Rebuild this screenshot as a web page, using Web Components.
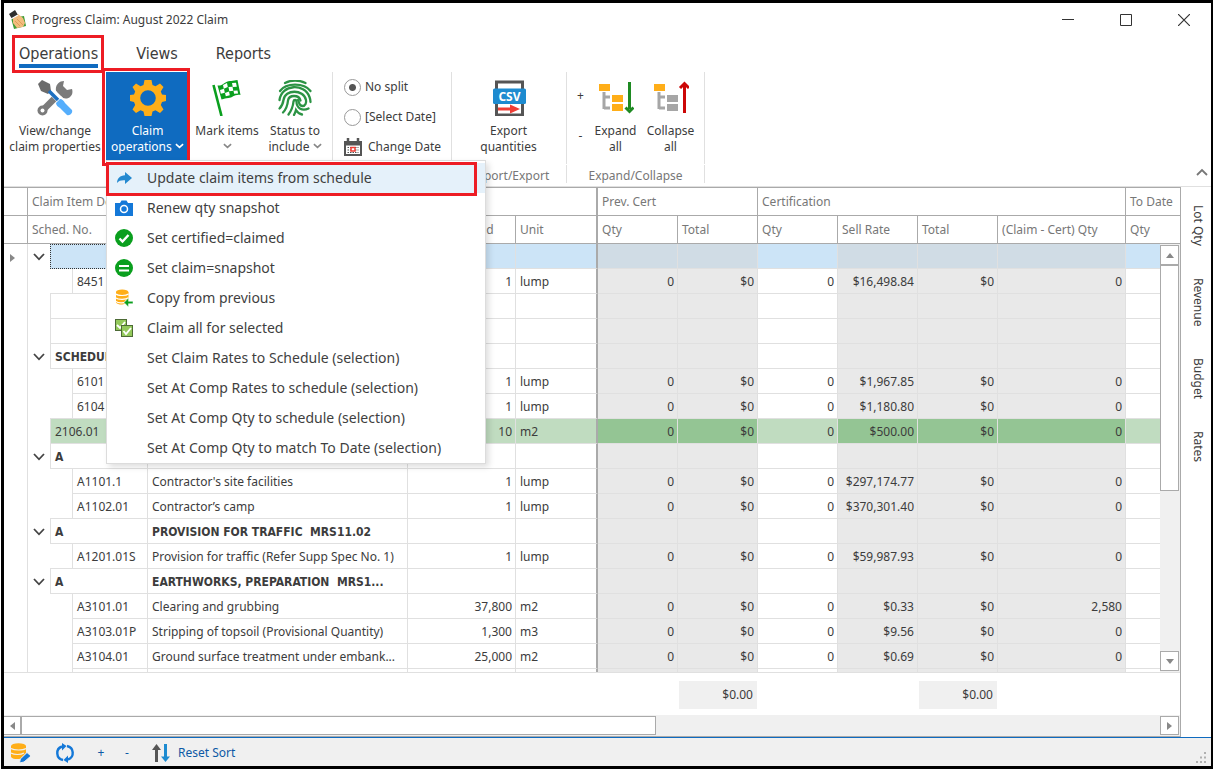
<!DOCTYPE html>
<html lang="en">
<head>
<meta charset="utf-8">
<title>Progress Claim: August 2022 Claim</title>
<style>
  body { margin: 0; font: 12px/16px "Noto Sans", "Open Sans", sans-serif; color: #3c3c3c; background: #fff; }
</style>
</head>
<body>
<claim-window></claim-window>
<script>
const ICONS = {
  app: ['0 0 20 20', '<path d="M3 8l13-2 2 10-12 3z" fill="#3f9c35"/><path d="M5 6l5-2 5 4 2 5-2 4-6 1-4-5z" fill="#f3bd7e"/><path d="M9 9l6 6M7 11l5 5" stroke="#d9964f" stroke-width=".8"/><path d="M1 4l6-4 3 5-6 4z" fill="#2e2e2e"/><path d="M3 9l7-4" stroke="#fff" stroke-width="1.4"/>'],
  tools: ['0 0 36 36', '<path d="M7.500 28.500L24 12" stroke="#7b7b7b" stroke-width="6.500"/><circle cx="5.500" cy="30.500" r="5" fill="#7b7b7b"/><path d="M27 1l-1 5 4 4 5-1c2 6-3 11-9 9l-7-7c-1-6 3-10 8-10z" fill="#7b7b7b"/><circle cx="5.500" cy="30.500" r="2" fill="#fff"/><path d="M12 9l12 12" stroke="#fff" stroke-width="7"/><path d="M1 4l4-4 8 4 1 7-3 3-7-3z" fill="#6b6b6b"/><path d="M12 11l9 9" stroke="#1d6fc0" stroke-width="3.500"/><path d="M19 23l4-4c2 0 4 2 5 4l7 7c1 3-2 6-5 5l-7-7c-2-1-4-3-4-5z" fill="#55aefc"/>'],
  gear: ['0 0 36 36', '<path fill="#ffae18" fill-rule="evenodd" d="M14.500 0h7l1 5 3 1.200L30 3.500 33.500 7l-2.700 4.500 1.200 3 4 .500v6l-4 1-1.200 3 2.700 4.500-3.500 3.500-4.500-2.700-3 1.300-1 4.400h-7l-1-4.400-3-1.300-4.500 2.700L2.500 29.500 5.200 25 4 22l-4-1v-6l4-.500 1.200-3L2.500 7 6 3.500l4.500 2.700 3-1.200zM18 10.200a7.800 7.800 0 1 0 0 15.600a7.800 7.800 0 1 0 0-15.600z"/>'],
  flag: ['0 0 36 36', '<path d="M4.500 5l8 31" stroke="#0a9f1e" stroke-width="2.600"/><path d="M8.500 5.500c5 1 8-5 13-4.500 3 .200 4-1 7-1l3 15c-6-1-8 3-12 3-3 0-4 1-7 1.500z" fill="#0a9f1e"/><path d="M14 5l4-2 .800 4-4 1.800zM23 3l4-.300.800 4-4 .300zM11 10l4-1.200.800 4-4 1zM19.500 7l4-.300.800 4-4 .600zM16 13l4-1.400.800 3.600-4 1zM24.500 10.800l4-.300.600 3-4 .300z" fill="#fff"/>'],
  finger: ['0 0 36 36', '<g fill="none" stroke="#2b9344" stroke-width="2.300" stroke-linecap="round"><path d="M8 3c6-3 14-3 20.500 0"/><path d="M3 11c6-8.500 24-8.500 30.500 0"/><path d="M2.500 20c2-16 25-17 30-3 .700 2 1 3 1 5"/><path d="M2.500 28.500c3-3 3.500-5 4-8.500 1.500-11 20-11 22.500 0 .500 2.500-.500 6-3.500 6-4 0-3-4-4.500-6"/><path d="M6 32.500c3-3 4.500-7 5-12 1-6 11-6 12.500 0"/><path d="M11.500 34.500c3-4 4.500-8 5-13 .300-2 3-2 3 0 0 7 6 10 12 7"/><path d="M17 35c1-2 1.500-3 2-5 1.500 2.500 3 4 6 4.500"/></g>'],
  csv: ['0 0 36 36', '<rect x="5.500" y="2" width="26" height="33" fill="#fff" stroke="#555" stroke-width="3"/><rect x="2" y="8.500" width="33" height="15.500" rx="1.500" fill="#1d8bd0"/><path d="M7 29h14" stroke="#ef3e36" stroke-width="3"/><path d="M19 24.500l10 4.500-10 4.500z" fill="#ef3e36"/><text x="18.500" y="20.500" text-anchor="middle" fill="#fff" font-size="12" font-weight="bold" font-family="Open Sans, sans-serif">CSV</text>'],
  expand: ['0 0 36 36', '<path d="M6 12v17M6 17h6M6 28h6" fill="none" stroke="#a6a6a6" stroke-width="3"/><rect x="1" y="4" width="11" height="7" fill="#ffae18"/><rect x="14" y="15" width="11" height="7" fill="#ffae18"/><rect x="14" y="24" width="11" height="7" fill="#ffae18"/><path d="M31.500 2v27" stroke="#1e8a22" stroke-width="3"/><path d="M27.500 27.500l4 4 4-4" fill="none" stroke="#1e8a22" stroke-width="3"/>'],
  collapse: ['0 0 36 36', '<path d="M6 12v17M6 17h6M6 28h6" fill="none" stroke="#a6a6a6" stroke-width="3"/><rect x="1" y="4" width="11" height="7" fill="#ffae18"/><rect x="14" y="15" width="11" height="7" fill="#a6a6a6"/><rect x="14" y="24" width="11" height="7" fill="#a6a6a6"/><path d="M31.500 5v28" stroke="#cc0707" stroke-width="3"/><path d="M27 8l4.500-4.500L36 8" fill="none" stroke="#cc0707" stroke-width="3"/>'],
  calendar: ['0 0 18 18', '<path d="M0 3h18v15H0z" fill="#555"/><path d="M2 7.500h14V16H2z" fill="#fff"/><path d="M4 0v5M14 0v5" stroke="#555" stroke-width="2.500"/><path d="M3.500 9.500h11M3.500 12h11M3.500 14.500h11" stroke="#555" stroke-width="1.200" stroke-dasharray="1.500 1"/><path d="M7 9.500h4v3.500H7z" fill="#fff" stroke="#ef3e36" stroke-width="1.500"/>'],
  share: ['0 0 18 18', '<path d="M10 3l7 6-7 6v-3.800C6 11 4 11.500 2 14c.300-5 3-7.500 8-7.800z" fill="#2489d0"/>'],
  camera: ['0 0 18 18', '<path d="M0 4h5l1.500-2.500h5L13 4h5v13H0z" fill="#1478d8"/><circle cx="9" cy="10" r="3.500" fill="none" stroke="#fff" stroke-width="1.500"/>'],
  check: ['0 0 18 18', '<circle cx="9" cy="9" r="9" fill="#0a9f1e"/><path d="M4.500 9.500l3 3 6-6.500" fill="none" stroke="#fff" stroke-width="2.400"/>'],
  equals: ['0 0 18 18', '<circle cx="9" cy="9" r="9" fill="#0a9f1e"/><path d="M4 7h10M4 11.500h10" stroke="#fff" stroke-width="2"/>'],
  copy: ['0 0 18 18', '<g fill="#ffae18"><path d="M1 3v10.500c2 2.500 7 2.500 9 1v-3h3.500V3z"/><ellipse cx="7.200" cy="3" rx="6.200" ry="2.600"/></g><path d="M1 5c2 2 10 2 12.500 0M1 8.800c2 2 10 2 12.500 0M1 12.300c2 2 8 2 10 .5" fill="none" stroke="#fff" stroke-width="1.200"/><path d="M9 13.500L13.500 9v3.300H18v2.400h-4.500V18z" fill="#0a9f1e" stroke="#fff" stroke-width=".5"/>'],
  claimall: ['0 0 18 18', '<rect x=".5" y=".5" width="11" height="11" fill="#93c95b" stroke="#4d6b36"/><path d="M2 6l3 3 5-6" fill="none" stroke="#fff" stroke-width="1.800"/><rect x="6.500" y="6.500" width="11" height="11" fill="#93c95b" stroke="#4d6b36"/><path d="M8.500 12l2.500 3 5-6" fill="none" stroke="#fff" stroke-width="1.800"/>'],
  dbedit: ['0 0 20 20', '<path d="M0 3v11c2 2.500 7 2.500 10 1.500L15 10V3z" fill="#ffae18"/><ellipse cx="7.500" cy="3" rx="7.500" ry="2.800" fill="#ffae18"/><path d="M0 5.500c3 2 12 2 15 0M0 10c3 2 10 2 13 0" fill="none" stroke="#f0f0f0" stroke-width="1.200"/><path d="M8.500 20l.800-4L16 9.500l4 3.500-7 6z" fill="#1478d8" stroke="#f0f0f0"/>'],
  refresh: ['0 0 20 20', '<g fill="none" stroke="#1478d8" stroke-width="2.400"><path d="M8 17A7 7 0 0 1 7 3.500"/><path d="M12 3a7 7 0 0 1 1 13.500"/></g><path d="M7 0v7.500L11.500 3zM13 20v-7.500L8.500 17z" fill="#1478d8"/>'],
  sort: ['0 0 18 18', '<path d="M4.500 18V4" stroke="#555" stroke-width="3"/><path d="M0 6l4.500-6L9 6z" fill="#555"/><path d="M13.500 0v14" stroke="#1d8bd0" stroke-width="3"/><path d="M9 12.500h9L13.500 18z" fill="#1d8bd0"/>'],
  down: ['0 0 10 6', '<path d="M1 1l4 3.500L9 1" fill="none" stroke="currentColor" stroke-width="1.800"/>'],
  up: ['0 0 12 8', '<path d="M1 7l5-5 5 5" fill="none" stroke="#777" stroke-width="1.800"/>'],
  open: ['0 0 12 8', '<path d="M1 1l5 5.300L11 1" fill="none" stroke="#444" stroke-width="1.800"/>'],
  min: ['0 0 12 12', '<path d="M0 5.500h12" stroke="#333"/>'],
  max: ['0 0 12 12', '<path d="M.5.5h11v11H.5z" fill="none" stroke="#333"/>'],
  close: ['0 0 12 12', '<path d="M0 0l12 12M12 0L0 12" stroke="#333" stroke-width="1.200"/>'],
  grip: ['0 0 12 12', '<path d="M9 0h2v2H9zM5 4.500h2v2H5zM9 4.500h2v2H9zM1 9h2v2H1zM5 9h2v2H5zM9 9h2v2H9z" fill="#b0b0b0"/>']
};

function define(name, html, setup) {
  customElements.define(name, class extends HTMLElement {
    connectedCallback() {
      if (this.shadowRoot) return;
      const t = document.createElement('template');
      t.innerHTML = html;
      this.attachShadow({ mode: 'open' }).append(t.content.cloneNode(true));
      if (setup) setup(this, this.shadowRoot);
    }
  });
}

const RESET = `*{box-sizing:border-box}
button{font:inherit;color:inherit;background:none;border:0;padding:0;margin:0;text-align:center}`;

customElements.define('ui-icon', class extends HTMLElement {
  connectedCallback() {
    if (this.shadowRoot) return;
    const [box, art] = ICONS[this.getAttribute('name')];
    this.attachShadow({ mode: 'open' }).innerHTML =
      `<style>:host{display:inline-block;flex:none;width:18px;height:18px}svg{display:block;width:100%;height:100%}</style>
       <svg viewBox="${box}" aria-hidden="true">${art}</svg>`;
  }
});

define('title-bar', `<style>${RESET}
:host{display:flex;align-items:center;height:33px;padding:0 21px 0 4px}
.name{flex:1;padding-left:4px}
button{width:12px;height:12px;margin-left:46px}
button ui-icon{width:12px;height:12px;display:block}
.app{width:20px;height:20px}
</style>
<ui-icon class="app" name="app"></ui-icon><span class="name"><slot></slot></span>
<button aria-label="Minimize"><ui-icon name="min"></ui-icon></button>
<button aria-label="Maximize"><ui-icon name="max"></ui-icon></button>
<button aria-label="Close"><ui-icon name="close"></ui-icon></button>`);

define('ribbon-tabs', `<style>${RESET}
:host{display:flex;gap:38px;height:36px;padding:6px 15px 0;font:16px/24px "DejaVu Sans Condensed","Noto Sans",sans-serif}
button{position:relative;height:22px}
button[aria-selected=true]::before{content:"";position:absolute;left:0;right:0;bottom:-4px;height:4px;background:#0f6bc0}
button[aria-selected=true]::after{content:"";position:absolute;inset:-7px -6px -9px -7px;border:3px solid #ed1c24}
</style>
<button role="tab" aria-selected="true">Operations</button>
<button role="tab">Views</button>
<button role="tab">Reports</button>`);

define('ribbon-group', `<style>${RESET}
:host{display:flex;flex-direction:column;flex:none;height:111px}
.body{display:flex;height:92px;border-right:1px solid #e0e0e0}
.cap{height:18px;margin-top:1px;padding-top:3px;border-right:1px solid #e0e0e0;text-align:center;color:#777;line-height:16px}
</style>
<div class="body"><slot></slot></div><div class="cap"></div>`,
(el, root) => { root.querySelector('.cap').textContent = el.getAttribute('caption') || ''; });

define('ribbon-button', `<style>${RESET}
:host{display:block;flex:none;position:relative}
button{display:flex;flex-direction:column;align-items:center;width:100%;height:89px;padding-top:8px;white-space:nowrap}
button ui-icon.big{display:block;width:36px;height:36px;margin-bottom:7px}
.line{display:block;height:16px}
.line ui-icon{width:9px;height:6px;vertical-align:2px;color:#888}
:host([active]) button{background:#0f6bc0;color:#fff}
:host([active]) .line ui-icon{color:#fff}
:host([active])::after{content:"";position:absolute;inset:-4px -1px -2px -4px;border:3px solid #ed1c24}
</style>
<button></button><slot name="menu"></slot>`,
(el, root) => {
  const b = root.querySelector('button');
  const arrow = el.hasAttribute('arrow') ? ' <ui-icon name="down"></ui-icon>' : '';
  b.innerHTML = `<ui-icon class="big" name="${el.getAttribute('icon')}"></ui-icon>
    <span class="line">${el.getAttribute('line1')}</span><span class="line">${el.getAttribute('line2') || ''}${arrow}</span>`;
});

define('menu-item', `<style>${RESET}
:host{display:block;position:relative}
button{display:flex;align-items:center;width:100%;height:30px;padding-left:8px;text-align:left;white-space:nowrap}
.ic{width:32px;height:18px}
:host([active]) button{background:#e5f1fa}
:host([active])::after{content:"";position:absolute;inset:-1px 8px -3px -1px;border:3px solid #ed1c24}
</style>
<button role="menuitem"><span class="ic"></span><slot></slot></button>`,
(el, root) => {
  if (el.hasAttribute('icon')) root.querySelector('.ic').innerHTML = `<ui-icon name="${el.getAttribute('icon')}"></ui-icon>`;
});

define('drop-menu', `<style>${RESET}
:host{display:block;position:absolute;left:0;top:88px;width:380px;z-index:5;background:#fff;border:1px solid #dcdcdc;padding:2px 0 0;
box-shadow:3px 3px 6px rgba(0,0,0,.13);font-size:14px;line-height:20px;color:#3f3f3f}
</style><slot></slot>`);

define('split-options', `<style>${RESET}
:host{display:flex;flex-direction:column;padding-left:11px;width:118px;gap:12px;padding-top:6px}
label,button{display:flex;align-items:center;height:18px;white-space:nowrap}
input{appearance:none;width:17px;height:17px;margin:0 4px 0 0;border:1px solid #999;border-radius:50%;background:#fff}
input:checked{background:radial-gradient(circle,#555 3px,#fff 4px)}
button ui-icon{margin-right:6px}
</style>
<label><input type="radio" name="split" checked>No split</label>
<label><input type="radio" name="split">[Select Date]</label>
<button><ui-icon name="calendar"></ui-icon>Change Date</button>`);

define('level-stepper', `<style>${RESET}
:host{display:flex;flex-direction:column;gap:24px;width:21px;padding:16px 0 0 6px}
button{height:16px;line-height:16px}
</style><button>+</button><button>-</button>`);

define('ribbon-bar', `<style>${RESET}
:host{display:flex;height:115px;border-bottom:1px solid #e0e0e0;position:relative;z-index:3}
.w1{width:102px}.w2{width:83px}.w3{width:76px}.w4{width:60px}.w5{width:113px}.w6{width:55px}
.fold{margin:auto 3px 10px auto;width:12px;height:8px}
.fold ui-icon{display:block;width:12px;height:8px}
ribbon-group.g1{width:329px}ribbon-group.g2{width:119px}ribbon-group.g3{width:115px}ribbon-group.g4{width:138px}
</style>
<ribbon-group class="g1">
  <ribbon-button class="w1" icon="tools" line1="View/change" line2="claim properties"></ribbon-button>
  <ribbon-button class="w2" active icon="gear" line1="Claim" line2="operations" arrow>
    <drop-menu slot="menu" role="menu">
      <menu-item active icon="share">Update claim items from schedule</menu-item>
      <menu-item icon="camera">Renew qty snapshot</menu-item>
      <menu-item icon="check">Set certified=claimed</menu-item>
      <menu-item icon="equals">Set claim=snapshot</menu-item>
      <menu-item icon="copy">Copy from previous</menu-item>
      <menu-item icon="claimall">Claim all for selected</menu-item>
      <menu-item>Set Claim Rates to Schedule (selection)</menu-item>
      <menu-item>Set At Comp Rates to schedule (selection)</menu-item>
      <menu-item>Set At Comp Qty to schedule (selection)</menu-item>
      <menu-item>Set At Comp Qty to match To Date (selection)</menu-item>
    </drop-menu>
  </ribbon-button>
  <ribbon-button class="w3" icon="flag" line1="Mark items" arrow></ribbon-button>
  <ribbon-button class="w4" icon="finger" line1="Status to" line2="include" arrow></ribbon-button>
</ribbon-group>
<ribbon-group class="g2"><split-options></split-options></ribbon-group>
<ribbon-group class="g3" caption="Import/Export"><ribbon-button class="w5" icon="csv" line1="Export" line2="quantities"></ribbon-button></ribbon-group>
<ribbon-group class="g4" caption="Expand/Collapse">
  <level-stepper></level-stepper>
  <ribbon-button class="w6" icon="expand" line1="Expand" line2="all"></ribbon-button>
  <ribbon-button class="w6" icon="collapse" line1="Collapse" line2="all"></ribbon-button>
</ribbon-group>
<button class="fold" aria-label="Collapse ribbon"><ui-icon name="up"></ui-icon></button>`);

define('scroll-strip', `<style>${RESET}
:host{display:flex;flex:none;background:#f0f0f0}
:host([vertical]){flex-direction:column;width:20px;padding:1px 1px 1px 0}
:host(:not([vertical])){height:21px;padding:1px 1px 1px 0}
button,.thumb{border:1px solid #aaa;background:#fff;flex:none}
button{width:19px;height:20px;display:grid;place-items:center}
:host(:not([vertical])) button{height:19px}
:host(:not([vertical])) button:first-of-type{width:17px;border-left:0}
.rest{flex:1}
button::before{content:"";border:4px solid transparent}
:host([vertical]) .a::before{border-top:0;border-bottom:5px solid #888}
:host([vertical]) .b::before{border-bottom:0;border-top:5px solid #888}
:host(:not([vertical])) .a::before{border-left:0;border-right:5px solid #888}
:host(:not([vertical])) .b::before{border-right:0;border-left:5px solid #888}
:host([vertical]) .thumb{height:53%}
:host(:not([vertical])) .thumb{width:54%}
</style><button class="a" aria-label="Back"></button><div class="thumb"></div><div class="rest"></div><button class="b" aria-label="Forward"></button>`);

const COLS = '<colgroup><col style="width:24px"><col style="width:120px"><col style="width:260px"><col style="width:108px"><col style="width:82px"><col style="width:80px"><col style="width:80px"><col style="width:80px"><col style="width:80px"><col style="width:80px"><col style="width:128px"><col></colgroup>';
const Z = ['0', '$0', '0'];
const vals = (qty, unit, rate, diff = '0') => [qty, unit, ...Z, rate, '$0', diff];
const ROWS = [
  { kind: 'group sel', no: '', open: 1 },
  { kind: 'leaf last', no: '8451', v: vals('1', 'lump', '$16,498.84') },
  { kind: 'group', no: '' },
  { kind: 'group', no: '' },
  { kind: 'group', no: 'SCHEDULE', open: 1 },
  { kind: 'leaf', no: '6101', v: vals('1', 'lump', '$1,967.85') },
  { kind: 'leaf last', no: '6104', v: vals('1', 'lump', '$1,180.80') },
  { kind: 'item green', no: '2106.01', v: vals('10', 'm2', '$500.00') },
  { kind: 'group', no: 'A', open: 1 },
  { kind: 'leaf', no: 'A1101.1', d: "Contractor's site facilities", v: vals('1', 'lump', '$297,174.77') },
  { kind: 'leaf last', no: 'A1102.01', d: 'Contractor’s camp', v: vals('1', 'lump', '$370,301.40') },
  { kind: 'group', no: 'A', d: 'PROVISION FOR TRAFFIC&nbsp; MRS11.02', open: 1 },
  { kind: 'leaf last', no: 'A1201.01S', d: 'Provision for traffic (Refer Supp Spec No. 1)', v: vals('1', 'lump', '$59,987.93') },
  { kind: 'group', no: 'A', d: 'EARTHWORKS, PREPARATION&nbsp; MRS1...', open: 1 },
  { kind: 'leaf', no: 'A3101.01', d: 'Clearing and grubbing', v: vals('37,800', 'm2', '$0.33', '2,580') },
  { kind: 'leaf', no: 'A3103.01P', d: 'Stripping of topsoil (Provisional Quantity)', v: vals('1,300', 'm3', '$9.56') },
  { kind: 'leaf', no: 'A3104.01', d: 'Ground surface treatment under embank...', v: vals('25,000', 'm2', '$0.69') },
  { kind: 'leaf', no: '' }
];

define('claim-grid', `<style>${RESET}
:host{display:flex;flex-direction:column;min-width:0;flex:1;border-top:1px solid #aaa;border-right:1px solid #aaa;border-bottom:1px solid #aaa}
table{width:100%;table-layout:fixed;border-collapse:separate;border-spacing:0}
th,td{padding:0 4px;overflow:hidden;white-space:nowrap;text-overflow:ellipsis;font-weight:inherit;text-align:left}
th{height:28px;border-right:1px solid #aaa;border-bottom:1px solid #aaa;color:#777}
th:last-child{border-right:0}
th.edge,td.edge{border-right:2px solid #aaa}
.view{display:flex;flex:1 1 0;min-height:0;overflow:hidden;border-bottom:1px solid #e0e0e0}
.rows{flex:1;min-width:0;overflow:hidden}
td{height:25px;border-right:1px solid #e0e0e0;border-bottom:1px solid #e0e0e0}
.rows td{padding-top:2px}
td:last-child{border-right:0}
td.n{text-align:right;padding-right:3px}
td.g{background:#e9e9e9}
td.mark{border-bottom:0;text-overflow:clip}
td.mark.cur::before{content:"";display:block;margin-left:2px;width:0;border:4px solid transparent;border-left:5px solid #888;border-right:0}
.rows td.tree{padding:0;border-bottom:0}
.t{display:flex;height:25px}
.exp{width:22px;display:grid;place-items:center}
.exp button,.exp ui-icon{display:block;width:12px;height:8px}
.in{width:22px}
.last .in{border-bottom:1px solid #e0e0e0}
.no{flex:1;min-width:0;overflow:hidden;border-left:1px solid #e0e0e0;border-bottom:1px solid #e0e0e0;padding-left:4px;line-height:26px}
.group td{font-weight:bold;font-family:"DejaVu Sans Condensed","Noto Sans",sans-serif}
.sel td,.sel .no{background:#cce4f7}
.sel td.mark,.sel td.tree{background:none}
.sel td.g{background:#d0dce5}
.sel .no{border:1px dotted #333}
.green td,.green .no{background:#c0dcc0}
.green td.mark,.green td.tree{background:none}
.green td.g{background:#94c594}
.foot{height:42px}
.foot td{border:0;height:28px;padding:0}
.foot table{margin-top:8px}
.foot .sum{background:#f0f0f0;text-align:right;padding-right:4px;border:solid #fff;border-width:0 1px}
</style>
<table><caption hidden>Claim columns</caption>${COLS}<thead>
<tr><th></th><th colspan="4" class="edge">Claim Item Details</th><th colspan="2">Prev. Cert</th><th colspan="4">Certification</th><th>To Date</th></tr>
<tr><th></th><th>Sched. No.</th><th aria-label="Description"></th><th>Qty Scheduled</th><th class="edge">Unit</th><th>Qty</th><th>Total</th><th>Qty</th><th>Sell Rate</th><th>Total</th><th>(Claim - Cert) Qty</th><th>Qty</th></tr>
</thead></table>
<div class="view"><div class="rows"><table>${COLS}<tbody></tbody></table></div><scroll-strip vertical></scroll-strip></div>
<div class="foot"><table>${COLS}<tbody><tr><td></td><td></td><td></td><td></td><td></td><td></td><td class="sum">$0.00</td><td></td><td></td><td class="sum">$0.00</td><td></td><td></td></tr></tbody></table></div>
<scroll-strip></scroll-strip>`,
(el, root) => {
  const cls = ['n', 'edge', 'n g', 'n g', 'n', 'n g', 'n g', 'n g'];
  root.querySelector('.rows tbody').innerHTML = ROWS.map((r, i) => {
    const v = r.v || Array(8).fill('');
    const leaf = r.kind.startsWith('leaf');
    const exp = r.open ? '<button aria-label="Collapse row"><ui-icon name="open"></ui-icon></button>' : '';
    return `<tr class="${r.kind}"><td class="mark${i ? '' : ' cur'}"></td>
      <td class="tree"><div class="t"><span class="exp">${exp}</span>${leaf ? '<span class="in"></span>' : ''}<span class="no">${r.no}</span></div></td>
      <td>${r.d || ''}</td>${v.map((x, k) => `<td class="${cls[k]}">${x}</td>`).join('')}<td></td></tr>`;
  }).join('');
});

define('side-tabs', `<style>${RESET}
:host{display:flex;flex-direction:column;align-items:center;flex:none;width:30px;gap:32px;padding:18px 0 0 4px}
button{writing-mode:vertical-rl;width:18px;line-height:18px}
</style>
<button role="tab">Lot Qty</button><button role="tab">Revenue</button><button role="tab">Budget</button><button role="tab">Rates</button>`);

define('status-bar', `<style>${RESET}
:host{display:flex;align-items:center;flex:none;height:29px;padding:2px 4px 0 7px;background:#f0f0f0;border-top:1px solid #0f6bc0;color:#0d59a5}
button{height:20px;display:flex;align-items:center}
.i,.i ui-icon{width:20px;height:20px}
.r{margin:0 13px 0 24px}
.s{width:26px;justify-content:center}
.sort{margin-left:12px;gap:8px}
.grip{width:12px;height:12px;margin:10px 0 0 auto}
</style>
<button class="i" aria-label="Edit data"><ui-icon name="dbedit"></ui-icon></button>
<button class="i r" aria-label="Refresh"><ui-icon name="refresh"></ui-icon></button>
<button class="s">+</button><button class="s">-</button>
<button class="sort"><ui-icon name="sort"></ui-icon>Reset Sort</button>
<ui-icon class="grip" name="grip"></ui-icon>`);

define('claim-window', `<style>${RESET}
:host{display:flex;flex-direction:column;box-sizing:border-box;height:100vh;margin-left:1px;border:solid #000;border-width:3px 2px 3px 3px;overflow:hidden}
.main{display:flex;flex:1;min-height:0}
</style>
<title-bar>Progress Claim: August 2022 Claim</title-bar>
<ribbon-tabs role="tablist"></ribbon-tabs>
<ribbon-bar></ribbon-bar>
<div class="main"><claim-grid></claim-grid><side-tabs></side-tabs></div>
<status-bar></status-bar>`);
</script>
</body>
</html>
